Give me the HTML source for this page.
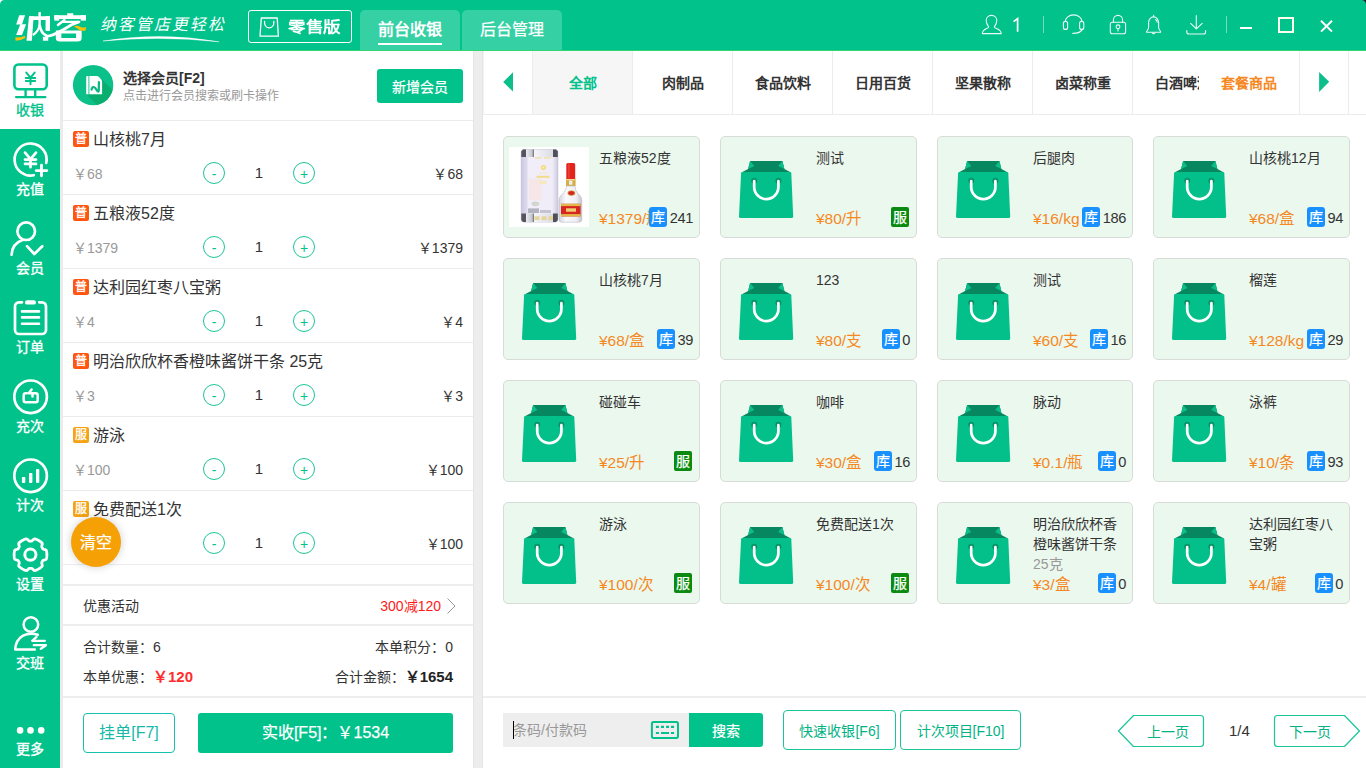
<!DOCTYPE html>
<html lang="zh-CN">
<head>
<meta charset="utf-8">
<title>纳客 前台收银</title>
<style>
*{box-sizing:border-box;margin:0;padding:0}
html,body{width:1366px;height:768px;overflow:hidden;background:#fff}
body{font-family:"Liberation Sans",sans-serif;color:#333;position:relative;font-size:14px}
.abs{position:absolute}
b{font-weight:bold}
#top{position:absolute;left:0;top:0;width:1366px;height:51px;background:#01c28b;border-bottom:1px solid #30d674}
#ver{position:absolute;left:248px;top:10px;width:104px;height:33px;border:1px solid #fff;border-radius:3px;color:#fff;font-weight:bold;font-size:15px;font-weight:900;line-height:32px;padding-left:39px}
#ver span{display:inline-block;transform:scaleX(1.17);transform-origin:0 50%}
#ver svg{position:absolute;left:9px;top:5px}
.tab{position:absolute;top:10px;height:40px;width:100px;background:#36d0a5;border-radius:5px 5px 0 0;color:#fff;font-size:16px;text-align:center;line-height:40px}
#tab1{left:360px;font-weight:bold}
#tab1 i{position:absolute;left:18px;top:33px;width:64px;height:2px;background:#fff}
#tab2{left:462px}
#side{position:absolute;left:0;top:51px;width:60px;height:717px;background:#01c28b}
#side .act{position:absolute;left:0;top:0;width:60px;height:78px;background:#fff}
.sl{position:absolute;left:0;width:60px;text-align:center;color:#fff;font-size:14px;line-height:16px;-webkit-text-stroke:0.35px currentColor}
.sl.on{color:#01c28b}
#side svg{position:absolute}
#gap1{position:absolute;left:60px;top:51px;width:3px;height:717px;background:#ebebeb}
#gap2{position:absolute;left:473px;top:51px;width:10px;height:717px;background:#ededed;border-left:1px solid #e5e5e5;border-right:1px solid #e5e5e5}
#mem-t{position:absolute;left:123px;top:69px;font-size:14px;font-weight:bold;color:#333;line-height:18px}
#mem-s{position:absolute;left:123px;top:88px;font-size:12px;color:#999;line-height:16px}
#addmem{position:absolute;left:377px;top:69px;width:86px;height:34px;background:#01c28b;border-radius:3px;color:#fff;font-size:14px;text-align:center;line-height:37px}
.hl{position:absolute;left:63px;width:410px;height:1px;background:#ececec}
.band{position:absolute;left:63px;width:410px;height:2px;background:#eeeeee}
.it{position:absolute;left:63px;width:410px;height:74px}
.it .bd{position:absolute;left:10px;top:10px;width:16px;height:16px;border-radius:2px;color:#fff;font-size:12px;line-height:16px;text-align:center;-webkit-text-stroke:0.3px #fff}
.bd.pu{background:#ff5511}
.bd.fu{background:#f5a313}
.it .nm{position:absolute;left:30px;top:8px;font-size:16px;line-height:22px;color:#333;white-space:nowrap}
.it .pr{position:absolute;left:10px;top:43px;font-size:14px;line-height:20px;color:#999;white-space:nowrap}
.it .tt{position:absolute;right:10px;top:43px;font-size:14px;line-height:20px;color:#333;white-space:nowrap}
.it .q{position:absolute;left:186px;top:42px;width:20px;text-align:center;font-size:15px;line-height:20px;color:#333}
.cb{position:absolute;top:41px;width:22px;height:22px;border:1px solid #1cc598;border-radius:50%;color:#01c28b;font-size:14px;line-height:22.5px;text-align:center}
.cb.m{left:140px}
.cb.p{left:230px}
#clear{position:absolute;left:71px;top:517px;width:50px;height:50px;border-radius:50%;background:#f5a004;color:#fff;font-size:16px;line-height:52px;text-align:center;box-shadow:0 0 8px rgba(0,0,0,0.2)}
.t14{position:absolute;font-size:14px;line-height:20px;white-space:nowrap;color:#333}
.red{color:#ff2d2d;font-size:15px}
.dk{color:#222;font-size:15px}
#hang{position:absolute;left:83px;top:713px;width:92px;height:40px;border:1px solid #16bfae;border-radius:4px;color:#16b9a8;font-size:16px;line-height:38px;text-align:center}
#pay{position:absolute;left:198px;top:713px;width:255px;height:40px;background:#01c28b;border-radius:3px;color:#fff;font-size:16px;line-height:40px;text-align:center}
#cat{position:absolute;left:484px;top:51px;width:882px;height:64px;border-bottom:1px solid #ececec;background:#fff;box-shadow:-1px 0 0 #f3f3f3}
.cc{position:absolute;top:0;height:63px;width:100px;border-left:1px solid #ececec;font-size:14px;font-weight:bold;color:#333;line-height:65px;text-align:center;white-space:nowrap;overflow:hidden;background:#fff}
.cc.on{background:#f6f6f6;color:#01c28b}
.cc.pk{color:#f5881f;width:100px;border-left:none}
.cc.ar{width:49px}
.cc.ar2{width:18px}
.card{position:absolute;width:197px;height:102px;background:#ebf8ee;border:1px solid #d8dcd9;border-radius:5px}
.card .nm{position:absolute;left:95px;top:11px;width:92px;font-size:14px;line-height:20px;color:#333}
.card .nm .g{color:#999;display:block}
.card .pr{position:absolute;left:95px;top:72px;font-size:15.5px;line-height:20px;color:#f5881f;white-space:nowrap}
.card .st{position:absolute;right:6px;top:70px;height:20px;font-size:14.6px;letter-spacing:-0.4px;line-height:22px;color:#333;white-space:nowrap}
.card .ku{display:inline-block;vertical-align:top;width:18px;height:20px;border-radius:3px;background:#1890ff;color:#fff;font-size:14px;line-height:20px;text-align:center;margin-right:2.5px;letter-spacing:0}
.card .fu{position:absolute;right:7px;top:70px;width:18px;height:20px;border-radius:2px;background:#0a8a10;color:#fff;font-size:14px;line-height:20px;text-align:center}
.card svg.bag{position:absolute;left:17px;top:23px}
.card svg.wine{position:absolute;left:5px;top:10px}
#sin{position:absolute;left:503px;top:713px;width:186px;height:34px;background:#eeeeee;color:#999;font-size:14px;line-height:34px;padding-left:10px}
#sin i{position:absolute;left:10px;top:8px;width:1px;height:18px;background:#000}
#sin svg{position:absolute;left:147px;top:7px}
#sbtn{position:absolute;left:689px;top:713px;width:74px;height:34px;background:#01c28b;border-radius:0 3px 3px 0;color:#fff;font-size:14px;line-height:36px;text-align:center}
.ob{position:absolute;top:710px;height:40px;border:1px solid #1cc598;border-radius:4px;color:#02b383;font-size:14px;line-height:40px;text-align:center}
.pg{position:absolute;font-size:16px;line-height:20px;color:#02b383}

#addmem,#sbtn,#pay,#clear,#tab2,.card .ku,.card .fu{-webkit-text-stroke:0.25px #fff}
</style>
</head>
<body>
<div id="top">
<svg class="abs" style="left:0;top:0" width="240" height="50" viewBox="0 0 240 50" role="img" aria-label="纳客"><title>纳客</title><g transform="translate(10 6) scale(0.0615)" fill="#fff"><path d="M150 150 H245 L195 300 H100 Z"/><path d="M168 295 H262 L195 470 H100 Z"/><path d="M310 165 H385 L355 565 H268 Z"/><path d="M310 165 H650 V228 H305 Z"/><path d="M578 165 H650 V405 H578 Z"/><path d="M535 500 H622 V565 H535 Z"/><path d="M482 100 V330" fill="none" stroke="#fff" stroke-width="40"/><path d="M482 310 Q472 400 372 472" fill="none" stroke="#fff" stroke-width="36"/><path d="M482 310 Q500 440 600 488 Q690 500 1000 305 L1122 258" fill="none" stroke="#fff" stroke-width="44" stroke-linejoin="round"/><path d="M930 118 H1030 V160 H930 Z"/><path d="M720 150 H1235 V212 H720 Z"/><path d="M720 150 H800 V238 H720 Z"/><path d="M1150 150 H1235 V238 H1150 Z"/><path d="M885 228 L780 308" fill="none" stroke="#fff" stroke-width="40" stroke-linecap="round"/><path d="M870 258 H1125" fill="none" stroke="#fff" stroke-width="38" stroke-linecap="round"/><path fill-rule="evenodd" d="M745 398 H1165 V520 Q1165 578 1100 578 H810 Q745 578 745 520 Z M835 448 H1075 V520 H835 Z"/><path d="M85 512 Q165 512 245 486 L248 520 Q170 565 92 567 Z" fill="#fdc006"/><path d="M1035 335 Q1090 305 1150 342 Q1195 360 1238 342 L1228 400 Q1160 415 1105 372 Q1075 348 1035 335 Z" fill="#fdc006"/></g><g transform="translate(100 30) skewX(-12)"><text x="0" y="0" font-size="16" fill="#fff" textLength="124" lengthAdjust="spacing">纳客管店更轻松</text></g><path d="M103 41 Q160 31.6 219 41.8 Q160 35.4 103 41Z" fill="#fff" stroke="#fff" stroke-width="0.4"/></svg>
<div id="ver"><svg width="22" height="22" viewBox="258 16 22 22"><path d="M261.3 18 H277.2 L278.4 36.2 H260 Z" fill="none" stroke="#fff" stroke-width="1.3" stroke-linejoin="round"/><path d="M264.6 21.5 V23 a4.6 4.8 0 0 0 9.2 0 V21.5" fill="none" stroke="#fff" stroke-width="1.3" stroke-linecap="round"/></svg><span>零售版</span></div>
<div class="tab" id="tab1">前台收银<i></i></div>
<div class="tab" id="tab2">后台管理</div>
<svg class="abs" style="left:0;top:0" width="1366" height="50" viewBox="0 0 1366 50"><path d="M0 0 H4.5 A4.5 4.5 0 0 0 0 4.5 Z" fill="#f4f0f4"/><path d="M1366 0 H1361.5 A4.5 4.5 0 0 1 1366 4.5 Z" fill="#2a1a2c"/><path d="M991.5 15.4 C995 15.4 996.8 18 996.8 20.5 C996.8 23.5 995 26 994.3 27 C994.3 28.8 1001.2 28.5 1001.2 33.6 H982.3 C982.3 28.5 988.7 28.8 988.7 27 C988 26 986.2 23.5 986.2 20.5 C986.2 18 988 15.4 991.5 15.4 Z" fill="none" stroke="#fff" stroke-opacity="0.92" stroke-width="1.1" stroke-linecap="round" stroke-linejoin="round"/><path d="M1013.6 21.6 L1017.6 18.6 V31.8" fill="none" stroke="#fff" stroke-width="1.7" stroke-linejoin="miter"/><rect x="1043" y="16" width="1" height="17" fill="#fff" fill-opacity="0.45"/><path d="M1065.3 21.5 a8.3 6.6 0 0 1 16.6 0" fill="none" stroke="#fff" stroke-opacity="0.92" stroke-width="1.1" stroke-linecap="round" stroke-linejoin="round"/><rect x="1063.4" y="21.4" width="4.2" height="8" rx="2" fill="none" stroke="#fff" stroke-opacity="0.92" stroke-width="1.1" stroke-linecap="round" stroke-linejoin="round"/><rect x="1079.6" y="21.4" width="4.2" height="8" rx="2" fill="none" stroke="#fff" stroke-opacity="0.92" stroke-width="1.1" stroke-linecap="round" stroke-linejoin="round"/><path d="M1082.2 29.4 Q1080.5 33.2 1072.8 33.3" fill="none" stroke="#fff" stroke-opacity="0.92" stroke-width="1.3" stroke-linecap="round" stroke-linejoin="round"/><rect x="1110.3" y="22.3" width="15.3" height="11.4" rx="2" fill="none" stroke="#fff" stroke-opacity="0.92" stroke-width="1.1" stroke-linecap="round" stroke-linejoin="round"/><path d="M1113.4 22.3 V20 a4.6 4.6 0 0 1 9.2 0 V22.3" fill="none" stroke="#fff" stroke-opacity="0.92" stroke-width="1.1" stroke-linecap="round" stroke-linejoin="round"/><circle cx="1118" cy="26.8" r="1.9" fill="none" stroke="#fff" stroke-opacity="0.92" stroke-width="1.1" stroke-linecap="round" stroke-linejoin="round"/><path d="M1118 28.8 V31" fill="none" stroke="#fff" stroke-opacity="0.92" stroke-width="1.1" stroke-linecap="round" stroke-linejoin="round"/><path d="M1146.6 32.3 H1160.6 Q1160.9 31.3 1160 30.6 Q1158.6 29.4 1158.6 27 V22.5 a5 5.6 0 0 0 -10 0 V27 Q1148.6 29.4 1147.2 30.6 Q1146.3 31.3 1146.6 32.3 Z" fill="none" stroke="#fff" stroke-opacity="0.92" stroke-width="1.1" stroke-linecap="round" stroke-linejoin="round"/><path d="M1152.3 33 a1.5 1.5 0 0 0 2.6 0 M1153.6 15.3 V16.6 M1155.5 19.5 Q1157 20.5 1157.2 22.3" fill="none" stroke="#fff" stroke-opacity="0.92" stroke-width="1.1" stroke-linecap="round" stroke-linejoin="round"/><path d="M1196.3 15.5 V28.6 M1190.6 23.3 L1196.3 28.8 L1202.2 23.3" fill="none" stroke="#fff" stroke-opacity="0.92" stroke-width="1.1" stroke-linecap="round" stroke-linejoin="round"/><path d="M1186.8 30.5 V32 Q1186.8 34 1188.8 34 H1203.6 Q1205.6 34 1205.6 32 V30.5" fill="none" stroke="#fff" stroke-opacity="0.92" stroke-width="1.1" stroke-linecap="round" stroke-linejoin="round"/><rect x="1226" y="16" width="1" height="17" fill="#fff" fill-opacity="0.45"/><rect x="1240" y="27" width="12" height="2" fill="#fff"/><rect x="1279" y="18" width="14" height="14" fill="none" stroke="#ffffee" stroke-width="2"/><path d="M1321 20.8 L1332 31.6 M1332 20.8 L1321 31.6" stroke="#fff" stroke-width="2" fill="none"/></svg>
</div>
<div id="side"><div class="act"></div>
<svg style="left:0;top:0" width="60" height="717" viewBox="0 51 60 717"><rect x="14.4" y="64.5" width="32.3" height="24.8" rx="4" fill="none" stroke="#01c28b" stroke-width="2.6" stroke-linecap="round" stroke-linejoin="round"/><path d="M25.6 90 V96.3 M35.2 90 V96.3" fill="none" stroke="#01c28b" stroke-width="2.4"/><path d="M16 97.1 H45.4" fill="none" stroke="#01c28b" stroke-width="2.2" stroke-linecap="round"/><path d="M26.3 72.6 L30.5 77.6 L34.7 72.6 M25.8 77.9 H35.2 M25.8 81 H35.2 M30.5 77.6 V84.2" fill="none" stroke="#01c28b" stroke-width="2" stroke-linecap="round" stroke-linejoin="round"/></svg><div class="sl on" style="top:51px">收银</div>
<svg style="left:0;top:0" width="60" height="717" viewBox="0 51 60 717"><path d="M46.2 163 A16 16 0 1 0 33.8 175.2" fill="none" stroke="#fff" stroke-width="2.7" stroke-linecap="round" stroke-linejoin="round"/><path d="M25 152.6 L30.5 159.2 L36 152.6 M25 159.6 H36 M25 163.9 H36 M30.5 159.2 V167.2" fill="none" stroke="#fff" stroke-width="2.7" stroke-linecap="round" stroke-linejoin="round"/><path d="M41.5 165.3 V175.8 M36.2 170.6 H46.8" fill="none" stroke="#fff" stroke-width="2.9" stroke-linecap="round" stroke-linejoin="round"/></svg><div class="sl" style="top:130px">充值</div>
<svg style="left:0;top:0" width="60" height="717" viewBox="0 51 60 717"><circle cx="26.2" cy="231.2" r="8.8" fill="none" stroke="#fff" stroke-width="2.7" stroke-linecap="round" stroke-linejoin="round"/><path d="M11.6 254.6 Q12.2 243.5 22.5 240" fill="none" stroke="#fff" stroke-width="2.7" stroke-linecap="round" stroke-linejoin="round"/><path d="M27 246.2 L34.3 254 L42.3 246.2" fill="none" stroke="#fff" stroke-width="2.7" stroke-linecap="round" stroke-linejoin="round"/></svg><div class="sl" style="top:209px">会员</div>
<svg style="left:0;top:0" width="60" height="717" viewBox="0 51 60 717"><path d="M22 302.3 H19 a4 4 0 0 0 -4 4 V330 a4 4 0 0 0 4 4 H42 a4 4 0 0 0 4 -4 V306.3 a4 4 0 0 0 -4 -4 H39.2" fill="none" stroke="#fff" stroke-width="2.7" stroke-linecap="round" stroke-linejoin="round"/><rect x="25" y="300.2" width="11" height="4.4" rx="2.2" fill="#fff"/><path d="M22 311.4 H39 M22 317.4 H39 M22 323.7 H39" fill="none" stroke="#fff" stroke-width="2.6" stroke-linecap="round" stroke-linejoin="round"/></svg><div class="sl" style="top:288px">订单</div>
<svg style="left:0;top:0" width="60" height="717" viewBox="0 51 60 717"><circle cx="30.6" cy="396.8" r="16.3" fill="none" stroke="#fff" stroke-width="2.7" stroke-linecap="round" stroke-linejoin="round"/><path d="M26.8 393.3 H25.7 a2 2 0 0 0 -2 2 V400.2 a2 2 0 0 0 2 2 H35.7 a2 2 0 0 0 2 -2 V395.3 a2 2 0 0 0 -2 -2 H28.7 L31.6 389.5 M32.5 393.3 V396.5" fill="none" stroke="#fff" stroke-width="2.5" stroke-linecap="round" stroke-linejoin="round"/></svg><div class="sl" style="top:367px">充次</div>
<svg style="left:0;top:0" width="60" height="717" viewBox="0 51 60 717"><circle cx="30.6" cy="475.8" r="16.3" fill="none" stroke="#fff" stroke-width="2.7" stroke-linecap="round" stroke-linejoin="round"/><rect x="21.9" y="476.9" width="3.4" height="6" rx="0.8" fill="#fff"/><rect x="29" y="473" width="3.4" height="9.9" rx="0.8" fill="#fff"/><rect x="36" y="469" width="3.3" height="13.9" rx="0.8" fill="#fff"/></svg><div class="sl" style="top:446px">计次</div>
<svg style="left:0;top:0" width="60" height="717" viewBox="0 51 60 717"><path d="M30.50 541.10 L31.09 541.10 L31.70 541.00 L32.36 540.59 L33.12 539.82 L33.97 539.03 L34.74 538.86 L35.43 539.06 L36.11 539.29 L36.78 539.55 L37.43 539.84 L38.07 540.15 L38.70 540.50 L39.31 540.87 L39.91 541.27 L40.48 541.69 L41.04 542.14 L41.58 542.61 L42.10 543.10 L42.34 543.85 L42.08 544.99 L41.79 546.03 L41.76 546.81 L41.98 547.39 L42.28 547.90 L42.57 548.42 L42.96 548.89 L43.65 549.25 L44.70 549.53 L45.81 549.87 L46.34 550.46 L46.51 551.15 L46.65 551.85 L46.76 552.56 L46.84 553.27 L46.88 553.98 L46.90 554.70 L46.88 555.42 L46.84 556.13 L46.76 556.84 L46.65 557.55 L46.51 558.25 L46.34 558.94 L45.81 559.53 L44.70 559.87 L43.65 560.15 L42.96 560.51 L42.57 560.98 L42.28 561.50 L41.98 562.01 L41.76 562.59 L41.79 563.37 L42.08 564.41 L42.34 565.55 L42.10 566.30 L41.58 566.79 L41.04 567.26 L40.48 567.71 L39.91 568.13 L39.31 568.53 L38.70 568.90 L38.07 569.25 L37.43 569.56 L36.78 569.85 L36.11 570.11 L35.43 570.34 L34.74 570.54 L33.97 570.37 L33.12 569.58 L32.36 568.81 L31.70 568.40 L31.09 568.30 L30.50 568.30 L29.91 568.30 L29.30 568.40 L28.64 568.81 L27.88 569.58 L27.03 570.37 L26.26 570.54 L25.57 570.34 L24.89 570.11 L24.22 569.85 L23.57 569.56 L22.93 569.25 L22.30 568.90 L21.69 568.53 L21.09 568.13 L20.52 567.71 L19.96 567.26 L19.42 566.79 L18.90 566.30 L18.66 565.55 L18.92 564.41 L19.21 563.37 L19.24 562.59 L19.02 562.01 L18.72 561.50 L18.43 560.98 L18.04 560.51 L17.35 560.15 L16.30 559.87 L15.19 559.53 L14.66 558.94 L14.49 558.25 L14.35 557.55 L14.24 556.84 L14.16 556.13 L14.12 555.42 L14.10 554.70 L14.12 553.98 L14.16 553.27 L14.24 552.56 L14.35 551.85 L14.49 551.15 L14.66 550.46 L15.19 549.87 L16.30 549.53 L17.35 549.25 L18.04 548.89 L18.43 548.42 L18.72 547.90 L19.02 547.39 L19.24 546.81 L19.21 546.03 L18.92 544.99 L18.66 543.85 L18.90 543.10 L19.42 542.61 L19.96 542.14 L20.52 541.69 L21.09 541.27 L21.69 540.87 L22.30 540.50 L22.93 540.15 L23.57 539.84 L24.22 539.55 L24.89 539.29 L25.57 539.06 L26.26 538.86 L27.03 539.03 L27.88 539.82 L28.64 540.59 L29.30 541.00 L29.91 541.10Z" fill="none" stroke="#fff" stroke-width="2.8" stroke-linecap="round" stroke-linejoin="round"/><circle cx="30.4" cy="554.7" r="5.6" fill="none" stroke="#fff" stroke-width="3" stroke-linecap="round" stroke-linejoin="round"/></svg><div class="sl" style="top:525px">设置</div>
<svg style="left:0;top:0" width="60" height="717" viewBox="0 51 60 717"><circle cx="30.9" cy="624.5" r="7.3" fill="none" stroke="#fff" stroke-width="2.5" stroke-linecap="round" stroke-linejoin="round"/><path d="M34.8 649.6 H15.2 Q15.6 640 23 635.6 Q29.5 632.5 37.8 634.8" fill="none" stroke="#fff" stroke-width="2.5" stroke-linecap="round" stroke-linejoin="round"/><path d="M36.6 636.9 L32.2 640.8 H44.8 M33.8 645.2 H46 L40.8 648.8" fill="none" stroke="#fff" stroke-width="2.3" stroke-linecap="round" stroke-linejoin="round"/></svg><div class="sl" style="top:604px">交班</div>
<svg style="left:0;top:0" width="60" height="717" viewBox="0 51 60 717"><circle cx="20.1" cy="730.4" r="3.3" fill="#fff"/><circle cx="30.5" cy="730.4" r="3.3" fill="#fff"/><circle cx="41.2" cy="730.4" r="3.3" fill="#fff"/></svg><div class="sl" style="top:690px">更多</div>
</div>
<div id="gap1"></div>
<div id="gap2"></div>
<div id="left">
<svg class="abs" style="left:72px;top:64px" width="42" height="42" viewBox="72 64 42 42"><defs><clipPath id="avc"><circle cx="93.1" cy="85.1" r="20.2"/></clipPath></defs><circle cx="93.1" cy="85.1" r="20.2" fill="#0cc089"/><g clip-path="url(#avc)"><path d="M86.4 94.2 L102 79.5 L125 102 L108 116 Z" fill="#0aab6c" opacity="0.85"/></g><path d="M87.4 76 H96.6 Q98 76 99 77 L101.2 79.6 Q102.1 80.6 102.1 82 V94.2 H86.2 V77.2 Q86.2 76 87.4 76 Z" fill="#fff"/><path d="M88.9 76 V94.2" stroke="#0cc089" stroke-width="0.9"/><path d="M91.6 89.6 Q91.8 87.2 93.6 87 Q94.6 87 95.4 88.2 L97.6 91.4 Q98.6 92 98.8 90.6 L98.9 82" fill="none" stroke="#0bb87f" stroke-width="2.2" stroke-linecap="round" stroke-linejoin="round"/></svg>
<div id="mem-t">选择会员[F2]</div>
<div id="mem-s">点击进行会员搜索或刷卡操作</div>
<div id="addmem">新增会员</div>
<div class="hl" style="top:120px"></div>
<div class="hl" style="top:194px"></div>
<div class="hl" style="top:268px"></div>
<div class="hl" style="top:342px"></div>
<div class="hl" style="top:416px"></div>
<div class="hl" style="top:490px"></div>
<div class="hl" style="top:564px"></div>
<div class="it" style="top:121px"><span class="bd pu">普</span><span class="nm">山核桃7月</span><span class="pr"><span class="y">￥</span>68</span><span class="cb m">-</span><span class="q">1</span><span class="cb p">+</span><span class="tt"><span class="y">￥</span>68</span></div>
<div class="it" style="top:195px"><span class="bd pu">普</span><span class="nm">五粮液52度</span><span class="pr"><span class="y">￥</span>1379</span><span class="cb m">-</span><span class="q">1</span><span class="cb p">+</span><span class="tt"><span class="y">￥</span>1379</span></div>
<div class="it" style="top:269px"><span class="bd pu">普</span><span class="nm">达利园红枣八宝粥</span><span class="pr"><span class="y">￥</span>4</span><span class="cb m">-</span><span class="q">1</span><span class="cb p">+</span><span class="tt"><span class="y">￥</span>4</span></div>
<div class="it" style="top:343px"><span class="bd pu">普</span><span class="nm">明治欣欣杯香橙味酱饼干条 25克</span><span class="pr"><span class="y">￥</span>3</span><span class="cb m">-</span><span class="q">1</span><span class="cb p">+</span><span class="tt"><span class="y">￥</span>3</span></div>
<div class="it" style="top:417px"><span class="bd fu">服</span><span class="nm">游泳</span><span class="pr"><span class="y">￥</span>100</span><span class="cb m">-</span><span class="q">1</span><span class="cb p">+</span><span class="tt"><span class="y">￥</span>100</span></div>
<div class="it" style="top:491px"><span class="bd fu">服</span><span class="nm">免费配送1次</span><span class="cb m">-</span><span class="q">1</span><span class="cb p">+</span><span class="tt"><span class="y">￥</span>100</span></div>
<div id="clear">清空</div>
<div class="band" style="top:584px"></div>
<div class="band" style="top:624px"></div>
<div class="band" style="top:696px"></div>
<div class="t14" style="left:83px;top:596px">优惠活动</div>
<div class="t14" style="right:925px;top:596px;color:#ff1a1a">300减120</div>
<svg class="abs" style="left:445px;top:596px" width="12" height="20" viewBox="0 0 12 20"><path d="M2.5 2.5 L10 10 L2.5 17.5" fill="none" stroke="#999" stroke-width="1"/></svg>
<div class="t14" style="left:83px;top:637px">合计数量：6</div>
<div class="t14" style="right:913px;top:637px">本单积分：0</div>
<div class="t14" style="left:83px;top:667px">本单优惠：<b class="red"><span class="y">￥</span>120</b></div>
<div class="t14" style="right:913px;top:667px">合计金额：<b class="dk"><span class="y">￥</span>1654</b></div>
<div id="hang">挂单[F7]</div>
<div id="pay">实收[F5]：<span class="y">￥</span>1534</div>
</div>
<div id="right">
<div id="cat">
<svg class="abs" style="left:17px;top:20px" width="14" height="24" viewBox="0 0 14 24"><path d="M12 1.2 L12 20.6 L2.2 10.9 Z" fill="#0cbf8a"/></svg>
<div class="cc on" style="left:48px">全部</div>
<div class="cc" style="left:148px">肉制品</div>
<div class="cc" style="left:248px">食品饮料</div>
<div class="cc" style="left:348px">日用百货</div>
<div class="cc" style="left:448px">坚果散称</div>
<div class="cc" style="left:548px">卤菜称重</div>
<div class="cc" style="left:648px">白酒啤酒</div>
<div class="cc pk" style="left:715px">套餐商品</div>
<div class="cc ar" style="left:815px"></div>
<div class="cc ar2" style="left:864px"></div>
<svg class="abs" style="left:833px;top:20px" width="14" height="24" viewBox="0 0 14 24"><path d="M2.1 0.9 L2.1 20.9 L12.2 10.8 Z" fill="#0cbf8a"/></svg>
</div>
<div class="card" style="left:503px;top:136px"><svg class="wine" width="80" height="80" viewBox="0 0 80 80"><rect width="80" height="80" fill="#fff"/><defs><linearGradient id="bx" x1="0" x2="1"><stop offset="0" stop-color="#cdc8e2"/><stop offset="0.14" stop-color="#dcd8ec"/><stop offset="0.2" stop-color="#f1eef9"/><stop offset="0.85" stop-color="#f0edf8"/><stop offset="1" stop-color="#cfcbe0"/></linearGradient><linearGradient id="bt" x1="0" x2="1"><stop offset="0" stop-color="#d4d4dc"/><stop offset="0.3" stop-color="#fafafd"/><stop offset="0.75" stop-color="#efeff4"/><stop offset="1" stop-color="#c3c3ce"/></linearGradient><linearGradient id="sv" x1="0" x2="1"><stop offset="0" stop-color="#55555f"/><stop offset="0.12" stop-color="#55555f"/><stop offset="0.14" stop-color="#e8e8ee"/><stop offset="0.3" stop-color="#c4c4cc"/><stop offset="0.33" stop-color="#6c6c76"/><stop offset="0.36" stop-color="#f4f4f8"/><stop offset="0.86" stop-color="#dcdce4"/><stop offset="0.88" stop-color="#50505a"/><stop offset="1" stop-color="#50505a"/></linearGradient></defs><g style="filter:blur(0.45px)"><rect x="12.3" y="2.5" width="36.5" height="72.5" rx="2.5" fill="url(#bx)" stroke="#bdb9cf" stroke-width="0.7"/><path d="M14 2.5 H47 L48.8 4.5 V10 H12.3 V4.5 Z" fill="url(#sv)"/><path d="M12.3 66.5 H48.8 V73 L47 75 H14 L12.3 73 Z" fill="url(#sv)"/><rect x="25.5" y="69.3" width="5" height="3.8" fill="#e6d59a"/><rect x="32.5" y="69.3" width="5" height="3.8" fill="#e6d59a"/><rect x="39.5" y="69.3" width="4.5" height="3.8" fill="#e6d59a"/><rect x="26" y="10.3" width="6.5" height="1.2" fill="#f0dd95"/><rect x="35" y="10.3" width="7" height="1.2" fill="#f0dd95"/><circle cx="34.4" cy="20.6" r="2.5" fill="#f3d977"/><circle cx="34.4" cy="20.6" r="1" fill="#fbf2c8"/><rect x="27.5" y="28.8" width="13" height="2" fill="#f4dc86"/><rect x="30" y="25.6" width="8.5" height="0.8" fill="#f6e7ae"/><rect x="20" y="31.8" width="12.5" height="21.5" fill="#fbe1da" opacity="0.6"/><rect x="30.5" y="33.5" width="7" height="3.5" fill="#f7e6b0" opacity="0.8"/><ellipse cx="26.4" cy="56.8" rx="4" ry="2.4" fill="#d3d6cf"/><rect x="19" y="61.4" width="11" height="4.6" fill="#9d9dab" opacity="0.75"/><rect x="31" y="63" width="11" height="3" fill="#b0b0bd" opacity="0.7"/><path d="M57.3 17.6 Q57.3 16 58.9 16 H64.6 Q66.2 16 66.2 17.6 V32 H57.3Z" fill="#e2241d"/><rect x="59" y="16.5" width="1.8" height="15" fill="#ee4a3c" opacity="0.7"/><rect x="57" y="32" width="9.6" height="7" fill="#d8ad45"/><rect x="60" y="33.5" width="3.4" height="4.2" fill="#ecebf0"/><rect x="57" y="32" width="9.6" height="1.2" fill="#efd98c"/><path d="M57.6 39 H66 L66.5 42.5 Q67.2 45.5 70.3 47.8 Q72.8 50 72.8 53.5 V72.5 Q72.8 75.2 69.8 75.2 H53 Q50 75.2 50 72.5 V53.5 Q50 50 52.6 47.8 Q55.8 45.5 56.8 42.5 Z" fill="url(#bt)" stroke="#b9b9c6" stroke-width="0.6"/><ellipse cx="62.4" cy="46.1" rx="3.6" ry="2.4" fill="#d3271f"/><ellipse cx="62.4" cy="46.1" rx="3.6" ry="2.4" fill="none" stroke="#d9b04a" stroke-width="0.7"/><rect x="52" y="56.8" width="19.6" height="12.6" fill="#d8261e"/><rect x="52" y="56.8" width="19.6" height="2.3" fill="#e0b94a"/><rect x="52" y="67.1" width="19.6" height="2.3" fill="#e0b94a"/><rect x="57" y="61.3" width="10" height="3.4" fill="#efcf72"/></g></svg><span class="nm">五粮液52度</span><span class="pr">¥1379/瓶</span><span class="st"><span class="ku">库</span>241</span></div>
<div class="card" style="left:720px;top:136px"><svg class="bag" width="56" height="59" viewBox="-1 -1 56 59"><path d="M11.1 0 H43.4 L45.4 8.1 L52 11.4 H2.5 L9.1 8.1 Z" fill="#06875f"/><path d="M11.1 0 L15.4 5.1 L9.1 8.1 Z M43.4 0 L39.1 5.1 L45.4 8.1Z" fill="#0bbd89"/><path d="M3.4 11 H51 Q52.2 11 52.3 12.2 L54.2 55.4 Q54.2 57.1 52.5 57.1 H1.7 Q0 57.1 0 55.4 L2.1 12.2 Q2.2 11 3.4 11 Z" fill="#03c08b"/><circle cx="15.2" cy="19.8" r="3" fill="#089267"/><circle cx="39.4" cy="19.8" r="3" fill="#089267"/><path d="M15.2 20.2 V26 A12.1 12.1 0 0 0 39.4 26 V20.2" fill="none" stroke="#fff" stroke-width="2.7" stroke-linecap="round"/></svg><span class="nm">测试</span><span class="pr">¥80/升</span><span class="fu">服</span></div>
<div class="card" style="left:937px;top:136px;width:196px"><svg class="bag" width="56" height="59" viewBox="-1 -1 56 59"><path d="M11.1 0 H43.4 L45.4 8.1 L52 11.4 H2.5 L9.1 8.1 Z" fill="#06875f"/><path d="M11.1 0 L15.4 5.1 L9.1 8.1 Z M43.4 0 L39.1 5.1 L45.4 8.1Z" fill="#0bbd89"/><path d="M3.4 11 H51 Q52.2 11 52.3 12.2 L54.2 55.4 Q54.2 57.1 52.5 57.1 H1.7 Q0 57.1 0 55.4 L2.1 12.2 Q2.2 11 3.4 11 Z" fill="#03c08b"/><circle cx="15.2" cy="19.8" r="3" fill="#089267"/><circle cx="39.4" cy="19.8" r="3" fill="#089267"/><path d="M15.2 20.2 V26 A12.1 12.1 0 0 0 39.4 26 V20.2" fill="none" stroke="#fff" stroke-width="2.7" stroke-linecap="round"/></svg><span class="nm">后腿肉</span><span class="pr">¥16/kg</span><span class="st"><span class="ku">库</span>186</span></div>
<div class="card" style="left:1153px;top:136px"><svg class="bag" width="56" height="59" viewBox="-1 -1 56 59"><path d="M11.1 0 H43.4 L45.4 8.1 L52 11.4 H2.5 L9.1 8.1 Z" fill="#06875f"/><path d="M11.1 0 L15.4 5.1 L9.1 8.1 Z M43.4 0 L39.1 5.1 L45.4 8.1Z" fill="#0bbd89"/><path d="M3.4 11 H51 Q52.2 11 52.3 12.2 L54.2 55.4 Q54.2 57.1 52.5 57.1 H1.7 Q0 57.1 0 55.4 L2.1 12.2 Q2.2 11 3.4 11 Z" fill="#03c08b"/><circle cx="15.2" cy="19.8" r="3" fill="#089267"/><circle cx="39.4" cy="19.8" r="3" fill="#089267"/><path d="M15.2 20.2 V26 A12.1 12.1 0 0 0 39.4 26 V20.2" fill="none" stroke="#fff" stroke-width="2.7" stroke-linecap="round"/></svg><span class="nm">山核桃12月</span><span class="pr">¥68/盒</span><span class="st"><span class="ku">库</span>94</span></div>
<div class="card" style="left:503px;top:258px"><svg class="bag" width="56" height="59" viewBox="-1 -1 56 59"><path d="M11.1 0 H43.4 L45.4 8.1 L52 11.4 H2.5 L9.1 8.1 Z" fill="#06875f"/><path d="M11.1 0 L15.4 5.1 L9.1 8.1 Z M43.4 0 L39.1 5.1 L45.4 8.1Z" fill="#0bbd89"/><path d="M3.4 11 H51 Q52.2 11 52.3 12.2 L54.2 55.4 Q54.2 57.1 52.5 57.1 H1.7 Q0 57.1 0 55.4 L2.1 12.2 Q2.2 11 3.4 11 Z" fill="#03c08b"/><circle cx="15.2" cy="19.8" r="3" fill="#089267"/><circle cx="39.4" cy="19.8" r="3" fill="#089267"/><path d="M15.2 20.2 V26 A12.1 12.1 0 0 0 39.4 26 V20.2" fill="none" stroke="#fff" stroke-width="2.7" stroke-linecap="round"/></svg><span class="nm">山核桃7月</span><span class="pr">¥68/盒</span><span class="st"><span class="ku">库</span>39</span></div>
<div class="card" style="left:720px;top:258px"><svg class="bag" width="56" height="59" viewBox="-1 -1 56 59"><path d="M11.1 0 H43.4 L45.4 8.1 L52 11.4 H2.5 L9.1 8.1 Z" fill="#06875f"/><path d="M11.1 0 L15.4 5.1 L9.1 8.1 Z M43.4 0 L39.1 5.1 L45.4 8.1Z" fill="#0bbd89"/><path d="M3.4 11 H51 Q52.2 11 52.3 12.2 L54.2 55.4 Q54.2 57.1 52.5 57.1 H1.7 Q0 57.1 0 55.4 L2.1 12.2 Q2.2 11 3.4 11 Z" fill="#03c08b"/><circle cx="15.2" cy="19.8" r="3" fill="#089267"/><circle cx="39.4" cy="19.8" r="3" fill="#089267"/><path d="M15.2 20.2 V26 A12.1 12.1 0 0 0 39.4 26 V20.2" fill="none" stroke="#fff" stroke-width="2.7" stroke-linecap="round"/></svg><span class="nm">123</span><span class="pr">¥80/支</span><span class="st"><span class="ku">库</span>0</span></div>
<div class="card" style="left:937px;top:258px;width:196px"><svg class="bag" width="56" height="59" viewBox="-1 -1 56 59"><path d="M11.1 0 H43.4 L45.4 8.1 L52 11.4 H2.5 L9.1 8.1 Z" fill="#06875f"/><path d="M11.1 0 L15.4 5.1 L9.1 8.1 Z M43.4 0 L39.1 5.1 L45.4 8.1Z" fill="#0bbd89"/><path d="M3.4 11 H51 Q52.2 11 52.3 12.2 L54.2 55.4 Q54.2 57.1 52.5 57.1 H1.7 Q0 57.1 0 55.4 L2.1 12.2 Q2.2 11 3.4 11 Z" fill="#03c08b"/><circle cx="15.2" cy="19.8" r="3" fill="#089267"/><circle cx="39.4" cy="19.8" r="3" fill="#089267"/><path d="M15.2 20.2 V26 A12.1 12.1 0 0 0 39.4 26 V20.2" fill="none" stroke="#fff" stroke-width="2.7" stroke-linecap="round"/></svg><span class="nm">测试</span><span class="pr">¥60/支</span><span class="st"><span class="ku">库</span>16</span></div>
<div class="card" style="left:1153px;top:258px"><svg class="bag" width="56" height="59" viewBox="-1 -1 56 59"><path d="M11.1 0 H43.4 L45.4 8.1 L52 11.4 H2.5 L9.1 8.1 Z" fill="#06875f"/><path d="M11.1 0 L15.4 5.1 L9.1 8.1 Z M43.4 0 L39.1 5.1 L45.4 8.1Z" fill="#0bbd89"/><path d="M3.4 11 H51 Q52.2 11 52.3 12.2 L54.2 55.4 Q54.2 57.1 52.5 57.1 H1.7 Q0 57.1 0 55.4 L2.1 12.2 Q2.2 11 3.4 11 Z" fill="#03c08b"/><circle cx="15.2" cy="19.8" r="3" fill="#089267"/><circle cx="39.4" cy="19.8" r="3" fill="#089267"/><path d="M15.2 20.2 V26 A12.1 12.1 0 0 0 39.4 26 V20.2" fill="none" stroke="#fff" stroke-width="2.7" stroke-linecap="round"/></svg><span class="nm">榴莲</span><span class="pr">¥128/kg</span><span class="st"><span class="ku">库</span>29</span></div>
<div class="card" style="left:503px;top:380px"><svg class="bag" width="56" height="59" viewBox="-1 -1 56 59"><path d="M11.1 0 H43.4 L45.4 8.1 L52 11.4 H2.5 L9.1 8.1 Z" fill="#06875f"/><path d="M11.1 0 L15.4 5.1 L9.1 8.1 Z M43.4 0 L39.1 5.1 L45.4 8.1Z" fill="#0bbd89"/><path d="M3.4 11 H51 Q52.2 11 52.3 12.2 L54.2 55.4 Q54.2 57.1 52.5 57.1 H1.7 Q0 57.1 0 55.4 L2.1 12.2 Q2.2 11 3.4 11 Z" fill="#03c08b"/><circle cx="15.2" cy="19.8" r="3" fill="#089267"/><circle cx="39.4" cy="19.8" r="3" fill="#089267"/><path d="M15.2 20.2 V26 A12.1 12.1 0 0 0 39.4 26 V20.2" fill="none" stroke="#fff" stroke-width="2.7" stroke-linecap="round"/></svg><span class="nm">碰碰车</span><span class="pr">¥25/升</span><span class="fu">服</span></div>
<div class="card" style="left:720px;top:380px"><svg class="bag" width="56" height="59" viewBox="-1 -1 56 59"><path d="M11.1 0 H43.4 L45.4 8.1 L52 11.4 H2.5 L9.1 8.1 Z" fill="#06875f"/><path d="M11.1 0 L15.4 5.1 L9.1 8.1 Z M43.4 0 L39.1 5.1 L45.4 8.1Z" fill="#0bbd89"/><path d="M3.4 11 H51 Q52.2 11 52.3 12.2 L54.2 55.4 Q54.2 57.1 52.5 57.1 H1.7 Q0 57.1 0 55.4 L2.1 12.2 Q2.2 11 3.4 11 Z" fill="#03c08b"/><circle cx="15.2" cy="19.8" r="3" fill="#089267"/><circle cx="39.4" cy="19.8" r="3" fill="#089267"/><path d="M15.2 20.2 V26 A12.1 12.1 0 0 0 39.4 26 V20.2" fill="none" stroke="#fff" stroke-width="2.7" stroke-linecap="round"/></svg><span class="nm">咖啡</span><span class="pr">¥30/盒</span><span class="st"><span class="ku">库</span>16</span></div>
<div class="card" style="left:937px;top:380px;width:196px"><svg class="bag" width="56" height="59" viewBox="-1 -1 56 59"><path d="M11.1 0 H43.4 L45.4 8.1 L52 11.4 H2.5 L9.1 8.1 Z" fill="#06875f"/><path d="M11.1 0 L15.4 5.1 L9.1 8.1 Z M43.4 0 L39.1 5.1 L45.4 8.1Z" fill="#0bbd89"/><path d="M3.4 11 H51 Q52.2 11 52.3 12.2 L54.2 55.4 Q54.2 57.1 52.5 57.1 H1.7 Q0 57.1 0 55.4 L2.1 12.2 Q2.2 11 3.4 11 Z" fill="#03c08b"/><circle cx="15.2" cy="19.8" r="3" fill="#089267"/><circle cx="39.4" cy="19.8" r="3" fill="#089267"/><path d="M15.2 20.2 V26 A12.1 12.1 0 0 0 39.4 26 V20.2" fill="none" stroke="#fff" stroke-width="2.7" stroke-linecap="round"/></svg><span class="nm">脉动</span><span class="pr">¥0.1/瓶</span><span class="st"><span class="ku">库</span>0</span></div>
<div class="card" style="left:1153px;top:380px"><svg class="bag" width="56" height="59" viewBox="-1 -1 56 59"><path d="M11.1 0 H43.4 L45.4 8.1 L52 11.4 H2.5 L9.1 8.1 Z" fill="#06875f"/><path d="M11.1 0 L15.4 5.1 L9.1 8.1 Z M43.4 0 L39.1 5.1 L45.4 8.1Z" fill="#0bbd89"/><path d="M3.4 11 H51 Q52.2 11 52.3 12.2 L54.2 55.4 Q54.2 57.1 52.5 57.1 H1.7 Q0 57.1 0 55.4 L2.1 12.2 Q2.2 11 3.4 11 Z" fill="#03c08b"/><circle cx="15.2" cy="19.8" r="3" fill="#089267"/><circle cx="39.4" cy="19.8" r="3" fill="#089267"/><path d="M15.2 20.2 V26 A12.1 12.1 0 0 0 39.4 26 V20.2" fill="none" stroke="#fff" stroke-width="2.7" stroke-linecap="round"/></svg><span class="nm">泳裤</span><span class="pr">¥10/条</span><span class="st"><span class="ku">库</span>93</span></div>
<div class="card" style="left:503px;top:502px"><svg class="bag" width="56" height="59" viewBox="-1 -1 56 59"><path d="M11.1 0 H43.4 L45.4 8.1 L52 11.4 H2.5 L9.1 8.1 Z" fill="#06875f"/><path d="M11.1 0 L15.4 5.1 L9.1 8.1 Z M43.4 0 L39.1 5.1 L45.4 8.1Z" fill="#0bbd89"/><path d="M3.4 11 H51 Q52.2 11 52.3 12.2 L54.2 55.4 Q54.2 57.1 52.5 57.1 H1.7 Q0 57.1 0 55.4 L2.1 12.2 Q2.2 11 3.4 11 Z" fill="#03c08b"/><circle cx="15.2" cy="19.8" r="3" fill="#089267"/><circle cx="39.4" cy="19.8" r="3" fill="#089267"/><path d="M15.2 20.2 V26 A12.1 12.1 0 0 0 39.4 26 V20.2" fill="none" stroke="#fff" stroke-width="2.7" stroke-linecap="round"/></svg><span class="nm">游泳</span><span class="pr">¥100/次</span><span class="fu">服</span></div>
<div class="card" style="left:720px;top:502px"><svg class="bag" width="56" height="59" viewBox="-1 -1 56 59"><path d="M11.1 0 H43.4 L45.4 8.1 L52 11.4 H2.5 L9.1 8.1 Z" fill="#06875f"/><path d="M11.1 0 L15.4 5.1 L9.1 8.1 Z M43.4 0 L39.1 5.1 L45.4 8.1Z" fill="#0bbd89"/><path d="M3.4 11 H51 Q52.2 11 52.3 12.2 L54.2 55.4 Q54.2 57.1 52.5 57.1 H1.7 Q0 57.1 0 55.4 L2.1 12.2 Q2.2 11 3.4 11 Z" fill="#03c08b"/><circle cx="15.2" cy="19.8" r="3" fill="#089267"/><circle cx="39.4" cy="19.8" r="3" fill="#089267"/><path d="M15.2 20.2 V26 A12.1 12.1 0 0 0 39.4 26 V20.2" fill="none" stroke="#fff" stroke-width="2.7" stroke-linecap="round"/></svg><span class="nm">免费配送1次</span><span class="pr">¥100/次</span><span class="fu">服</span></div>
<div class="card" style="left:937px;top:502px;width:196px"><svg class="bag" width="56" height="59" viewBox="-1 -1 56 59"><path d="M11.1 0 H43.4 L45.4 8.1 L52 11.4 H2.5 L9.1 8.1 Z" fill="#06875f"/><path d="M11.1 0 L15.4 5.1 L9.1 8.1 Z M43.4 0 L39.1 5.1 L45.4 8.1Z" fill="#0bbd89"/><path d="M3.4 11 H51 Q52.2 11 52.3 12.2 L54.2 55.4 Q54.2 57.1 52.5 57.1 H1.7 Q0 57.1 0 55.4 L2.1 12.2 Q2.2 11 3.4 11 Z" fill="#03c08b"/><circle cx="15.2" cy="19.8" r="3" fill="#089267"/><circle cx="39.4" cy="19.8" r="3" fill="#089267"/><path d="M15.2 20.2 V26 A12.1 12.1 0 0 0 39.4 26 V20.2" fill="none" stroke="#fff" stroke-width="2.7" stroke-linecap="round"/></svg><span class="nm">明治欣欣杯香橙味酱饼干条<span class="g">25克</span></span><span class="pr">¥3/盒</span><span class="st"><span class="ku">库</span>0</span></div>
<div class="card" style="left:1153px;top:502px"><svg class="bag" width="56" height="59" viewBox="-1 -1 56 59"><path d="M11.1 0 H43.4 L45.4 8.1 L52 11.4 H2.5 L9.1 8.1 Z" fill="#06875f"/><path d="M11.1 0 L15.4 5.1 L9.1 8.1 Z M43.4 0 L39.1 5.1 L45.4 8.1Z" fill="#0bbd89"/><path d="M3.4 11 H51 Q52.2 11 52.3 12.2 L54.2 55.4 Q54.2 57.1 52.5 57.1 H1.7 Q0 57.1 0 55.4 L2.1 12.2 Q2.2 11 3.4 11 Z" fill="#03c08b"/><circle cx="15.2" cy="19.8" r="3" fill="#089267"/><circle cx="39.4" cy="19.8" r="3" fill="#089267"/><path d="M15.2 20.2 V26 A12.1 12.1 0 0 0 39.4 26 V20.2" fill="none" stroke="#fff" stroke-width="2.7" stroke-linecap="round"/></svg><span class="nm">达利园红枣八宝粥</span><span class="pr">¥4/罐</span><span class="st"><span class="ku">库</span>0</span></div>
<div class="band" style="left:483px;width:883px;top:696px"></div>
<div id="sin"><i></i>条码/付款码<svg width="30" height="20" viewBox="0 0 30 20"><rect x="1.9" y="1.9" width="26.1" height="16" rx="1.6" fill="none" stroke="#01c28b" stroke-width="2"/><path d="M5.9 6.9 h3 M11 6.9 h3 M16.1 6.9 h2.9 M21 6.9 h3.1 M5.9 13 h3 M11 13 h8 M21 13 h3.1" stroke="#01c28b" stroke-width="2.1" fill="none"/></svg></div>
<div id="sbtn">搜索</div>
<div class="ob" style="left:783px;width:113px">快速收银[F6]</div>
<div class="ob" style="left:900px;width:121px">计次项目[F10]</div>
<svg class="abs" style="left:1110px;top:706px" width="256" height="50" viewBox="1110 706 256 50"><path d="M1133.5 715.5 H1200.5 a3 3 0 0 1 3 3 V743.5 a3 3 0 0 1 -3 3 H1133.5 L1118.5 731 Z" fill="#fff" stroke="#1cc598" stroke-width="1.2" stroke-linejoin="round"/><path d="M1277.5 715.5 H1344.5 L1359.5 731 L1344.5 746.5 H1277.5 a3 3 0 0 1 -3 -3 V718.5 a3 3 0 0 1 3 -3 Z" fill="#fff" stroke="#1cc598" stroke-width="1.2" stroke-linejoin="round"/></svg><div class="pg" style="left:1147px;top:721.5px;font-size:14px">上一页</div><div class="pg" style="left:1229px;top:721px;color:#333;font-size:15px">1/4</div><div class="pg" style="left:1289px;top:721.5px;font-size:14px">下一页</div>
</div>
</body>
</html>
